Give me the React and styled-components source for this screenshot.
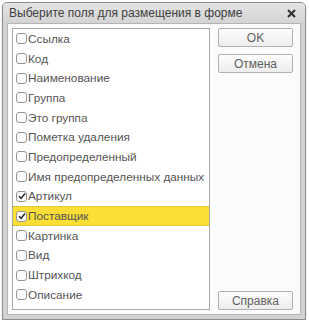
import React from "react";
import styled, { createGlobalStyle } from "styled-components";

const fields = [
    { name: "Ссылка" },
    { name: "Код" },
    { name: "Наименование" },
    { name: "Группа" },
    { name: "Это группа" },
    { name: "Пометка удаления" },
    { name: "Предопределенный" },
    { name: "Имя предопределенных данных" },
    { name: "Артикул", checked: true },
    { name: "Поставщик", checked: true, selected: true },
    { name: "Картинка" },
    { name: "Вид" },
    { name: "Штрихкод" },
    { name: "Описание" },
];

const GlobalStyle = createGlobalStyle`
    body {
        margin: 0;
        background: #ffffff;
        font-family: "Liberation Sans", Arial, sans-serif;
    }
`;

const CheckMark = () => (
    <svg width="8" height="8" viewBox="0 0 8 8">
        <path d="M1 4.2 L3.1 6.3 L7 1.6" fill="none" stroke="#2b2b2b" strokeWidth="1.5" />
    </svg>
);

const CloseIcon = () => (
    <svg width="9" height="9" viewBox="0 0 9 9">
        <path d="M1 1 L8 8 M8 1 L1 8" stroke="#2e2e2e" strokeWidth="2" />
    </svg>
);

const App = () => {
    return (
        <>
            <GlobalStyle />
            <Window>
                <TitleBar>
                    <Title>Выберите поля для размещения в форме</Title>
                    <Close><CloseIcon /></Close>
                </TitleBar>
                <Body>
                    <List>
                        {/*field rows*/}
                        {fields.map((f) => (
                            <Row key={f.name} selected={f.selected}>
                                <Box>{f.checked && <CheckMark />}</Box>
                                <Label>{f.name}</Label>
                            </Row>
                        ))}
                    </List>
                    <Side>
                        <Button>OK</Button>
                        <Button>Отмена</Button>
                        <Spacer />
                        <Button>Справка</Button>
                    </Side>
                </Body>
            </Window>
        </>
    );
};

const Window = styled.div`
    margin: 2px 0 0 2px;
    width: 304px;
    height: 318px;
    box-sizing: border-box;
    border: 1px solid #8d8d8d;
    border-radius: 5px 5px 0 0;
    background: #d2d2d2;
    display: flex;
    flex-direction: column;
    box-shadow: 0 1px 2px rgba(0, 0, 0, 0.2);
`;

const TitleBar = styled.div`
    height: 21px;
    display: flex;
    align-items: center;
    justify-content: space-between;
    padding: 0 6px 0 6px;
    background: linear-gradient(#e4e4e4, #d4d4d4);
    border-radius: 4px 4px 0 0;
`;

const Title = styled.span`
    font-size: 12px;
    color: #404040;
`;

const Close = styled.span`
    display: flex;
    margin-right: 3px;
`;

const Body = styled.div`
    flex: 1;
    margin: 0 4px 4px 4px;
    background: #fbfbfb;
    border: 1px solid #b4b4b4;
    display: flex;
    padding: 4px 4px 4px 4px;
    gap: 8px;
`;

const List = styled.div`
    width: 198px;
    height: 282px;
    box-sizing: border-box;
    border: 1px solid #a8a8a8;
    background: #ffffff;
    display: flex;
    flex-direction: column;
`;

const Row = styled.div`
    height: 19.7px;
    box-sizing: border-box;
    display: flex;
    align-items: center;
    padding-left: 3px;
    background: ${(p) => (p.selected ? "#fbdf36" : "transparent")};
    border-bottom: 1px dotted ${(p) => (p.selected ? "#c8ad2a" : "transparent")};
    border-top: 1px dotted ${(p) => (p.selected ? "#c8ad2a" : "transparent")};
`;

const Box = styled.span`
    width: 11px;
    height: 11px;
    box-sizing: border-box;
    border: 1px solid #959595;
    border-radius: 3px;
    background: #fdfdfd;
    display: flex;
    align-items: center;
    justify-content: center;
    margin-right: 1px;
`;

const Label = styled.span`
    font-size: 11.8px;
    color: #555555;
    white-space: nowrap;
`;

const Side = styled.div`
    flex: 1;
    display: flex;
    flex-direction: column;
    gap: 7px;
    padding-right: 3px;
`;

const Spacer = styled.div`
    flex: 1;
`;

const Button = styled.div`
    height: 19px;
    box-sizing: border-box;
    border: 1px solid #b0b0b0;
    border-radius: 2px;
    background: linear-gradient(#fdfdfd, #ededed);
    display: flex;
    align-items: center;
    justify-content: center;
    font-size: 12px;
    color: #606060;
`;

export default App;
